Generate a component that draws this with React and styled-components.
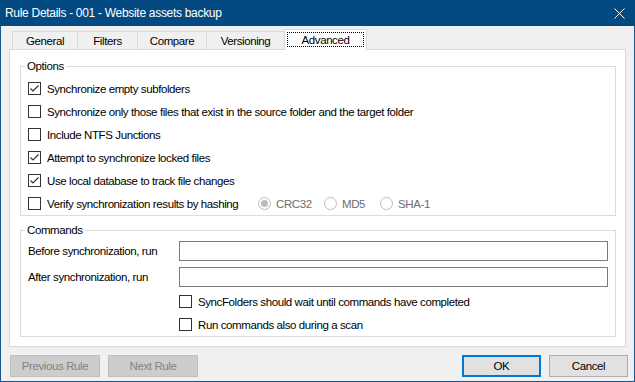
import React from "react";
import styled, { createGlobalStyle } from "styled-components";

const GlobalStyle = createGlobalStyle`
  html, body {
    margin: 0;
    padding: 0;
    background: #f0f0f0;
  }

  body {
    font-family: "Liberation Sans", Arial, sans-serif;
    font-size: 11.5px;
    letter-spacing: -0.4px;
    color: #000;
  }
`;

const Window = styled.div`
  width: 635px;
  height: 382px;
  display: flex;
  flex-direction: column;
  background: #f0f0f0;
`;

const TitleBar = styled.div`
  height: 26px;
  flex: none;
  display: flex;
  align-items: center;
  justify-content: space-between;
  padding: 0 10px 0 5px;
  background: #044a82;
  color: #fff;
  font-size: 12px;
  letter-spacing: -0.3px;
`;

const Body = styled.div`
  flex: 1;
  display: flex;
  flex-direction: column;
  padding: 3px 8px 0 8px;
  border: 1px solid #175590;
  border-top: none;
`;

const TabStrip = styled.div`
  height: 20px;
  display: flex;
  align-items: flex-end;
  padding-left: 3px;
`;

const Tab = styled.div`
  box-sizing: border-box;
  width: ${(p) => p.$width}px;
  height: ${(p) => (p.$active ? 21 : 18)}px;
  margin-left: -1px;
  margin-bottom: ${(p) => (p.$active ? -1 : 0)}px;
  display: flex;
  padding: ${(p) => (p.$active ? "2px 2px 3px" : "0")};
  align-items: center;
  justify-content: center;
  background: ${(p) => (p.$active ? "#fff" : "#f0f0f0")};
  border: 1px solid #d9d9d9;
  border-bottom: none;
  position: ${(p) => (p.$active ? "relative" : "static")};
  z-index: ${(p) => (p.$active ? 1 : 0)};

  &:first-child {
    margin-left: 0;
  }
`;

const Focus = styled.div`
  flex: 1;
  align-self: stretch;
  display: flex;
  align-items: center;
  justify-content: center;
  border: 1px dotted #000;
`;

const Panel = styled.div`
  box-sizing: border-box;
  height: 298px;
  display: flex;
  flex-direction: column;
  padding: 0 9px 0 10px;
  background: #fff;
  border: 1px solid #d9d9d9;
`;

const Group = styled.fieldset`
  margin: ${(p) => p.$top}px 0 0;
  padding: 3px 7px 0;
  border: 1px solid #dcdcdc;
  min-width: 0;
`;

const Legend = styled.legend`
  padding: 0 2px;
  margin-left: -3px;
  line-height: 16px;
`;

const Row = styled.div`
  height: 23px;
  display: flex;
  align-items: center;
  gap: 6px;
  padding-left: ${(p) => p.$indent || 0}px;
`;

const Box = styled.span`
  box-sizing: border-box;
  width: 13px;
  height: 13px;
  flex: none;
  display: flex;
  align-items: center;
  justify-content: center;
  background: #fff;
  border: 1px solid #333;
`;

const RowLabel = styled.span`
  white-space: nowrap;
  width: ${(p) => (p.$width ? `${p.$width}px` : "auto")};
  flex: none;
`;

const RadioItem = styled.span`
  display: flex;
  align-items: center;
  gap: 5px;
  width: ${(p) => (p.$width ? `${p.$width}px` : "auto")};
  color: #6d6d6d;
`;

const Circle = styled.span`
  box-sizing: border-box;
  width: 13px;
  height: 13px;
  flex: none;
  border-radius: 50%;
  border: 1px solid #bcbcbc;
  background: #fff;
  display: flex;
  align-items: center;
  justify-content: center;

  &::after {
    content: "";
    width: 7px;
    height: 7px;
    border-radius: 50%;
    background: ${(p) => (p.$on ? "#bcbcbc" : "transparent")};
  }
`;

const FieldRow = styled.div`
  display: grid;
  grid-template-columns: 151px 1fr;
  align-items: center;
  height: 20px;
  margin-bottom: ${(p) => p.$gap}px;
`;

const Input = styled.div`
  box-sizing: border-box;
  height: 20px;
  background: #fff;
  border: 1px solid #7a7a7a;
`;

const Footer = styled.div`
  display: flex;
  align-items: center;
  margin: 8px -2px 0 1px;
  gap: 8px;
`;

const Button = styled.div`
  box-sizing: border-box;
  width: ${(p) => p.$width}px;
  height: 22px;
  display: flex;
  align-items: center;
  justify-content: center;
  background: ${(p) => (p.$disabled ? "#cccccc" : "#e1e1e1")};
  color: ${(p) => (p.$disabled ? "#838383" : "#000")};
  border: ${(p) =>
    p.$default
      ? "2px solid #0078d7"
      : p.$disabled
      ? "1px solid #bfbfbf"
      : "1px solid #adadad"};
`;

const Spacer = styled.div`
  flex: 1;
`;

const Check = ({ checked }) => (
  <Box>
    {checked && (
      <svg width="11" height="11" viewBox="0 0 11 11">
        <polyline
          points="1.5,5.5 4,8 9.5,2.5"
          fill="none"
          stroke="#333"
          strokeWidth="1.2"
        />
      </svg>
    )}
  </Box>
);

const CheckRow = ({ checked, children, indent }) => (
  <Row $indent={indent}>
    <Check checked={checked} />
    <RowLabel>{children}</RowLabel>
  </Row>
);

const tabs = [
  ["General", 66],
  ["Filters", 61],
  ["Compare", 70],
  ["Versioning", 79],
  ["Advanced", 83],
];

export default function App() {
  return (
    <Window>
      <GlobalStyle />
      <TitleBar>
        <span>Rule Details - 001 - Website assets backup</span>
        <svg width="11" height="11" viewBox="0 0 11 11">
          <path d="M0.5 0.5 L10.5 10.5 M10.5 0.5 L0.5 10.5" stroke="#fff" strokeWidth="1" />
        </svg>
      </TitleBar>
      <Body>
        <TabStrip>
          {tabs.map(([name, width]) =>
            name === "Advanced" ? (
              <Tab key={name} $width={width} $active>
                <Focus>{name}</Focus>
              </Tab>
            ) : (
              <Tab key={name} $width={width}>
                {name}
              </Tab>
            )
          )}
        </TabStrip>
        <Panel>
          <Group $top={8}>
            <Legend>Options</Legend>
            <CheckRow checked>Synchronize empty subfolders</CheckRow>
            <CheckRow>
              Synchronize only those files that exist in the source folder and the target folder
            </CheckRow>
            <CheckRow>Include NTFS Junctions</CheckRow>
            <CheckRow checked>Attempt to synchronize locked files</CheckRow>
            <CheckRow checked>Use local database to track file changes</CheckRow>
            <Row>
              <Check />
              <RowLabel $width={205}>Verify synchronization results by hashing</RowLabel>
              <RadioItem $width={60}>
                <Circle $on />
                CRC32
              </RadioItem>
              <RadioItem $width={50}>
                <Circle />
                MD5
              </RadioItem>
              <RadioItem>
                <Circle />
                SHA-1
              </RadioItem>
            </Row>
          </Group>
          <Group $top={6}>
            <Legend>Commands</Legend>
            <FieldRow $gap={6}>
              <span>Before synchronization, run</span>
              <Input />
            </FieldRow>
            <FieldRow $gap={3}>
              <span>After synchronization, run</span>
              <Input />
            </FieldRow>
            <CheckRow indent={151}>SyncFolders should wait until commands have completed</CheckRow>
            <CheckRow indent={151}>Run commands also during a scan</CheckRow>
          </Group>
        </Panel>
        <Footer>
          <Button $width={90} $disabled>
            Previous Rule
          </Button>
          <Button $width={90} $disabled>
            Next Rule
          </Button>
          <Spacer />
          <Button $width={79} $default>
            OK
          </Button>
          <Button $width={79}>Cancel</Button>
        </Footer>
      </Body>
    </Window>
  );
}
